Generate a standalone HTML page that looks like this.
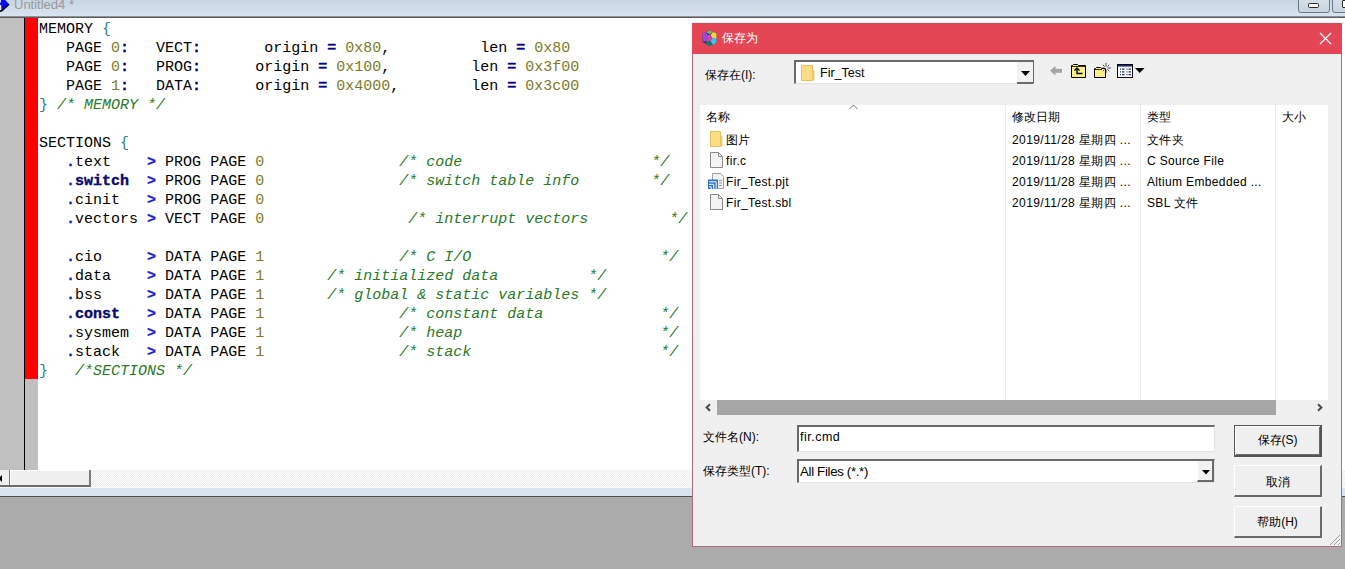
<!DOCTYPE html>
<html><head><meta charset="utf-8">
<style>
*{box-sizing:border-box}
html,body{margin:0;padding:0}
body{width:1345px;height:569px;overflow:hidden;position:relative;background:#ababab;font-family:"Liberation Sans",sans-serif}
.a{position:absolute}
#tbar{left:0;top:0;width:1345px;height:16px;background:linear-gradient(#c8d5e2,#d8e4f0)}
#tline{left:0;top:16px;width:1345px;height:2px;background:#5c5c5c;border-top:1px solid #8e9296}
#tline2{left:0;top:17px;width:1345px;height:1px;background:#b8b8b8}
#ed{left:0;top:17px;width:1345px;height:453px;background:#fff}
#gut{left:0;top:18px;width:24px;height:452px;background:#c0c0c0}
#gline{left:24px;top:18px;width:1px;height:452px;background:#000}
#gut2{left:25px;top:18px;width:13px;height:452px;background:#c0c0c0}
#red{left:25px;top:18px;width:13px;height:361px;background:#fe0000}
pre#code{left:39px;top:20px;margin:0;font-family:"Liberation Mono",monospace;font-size:15px;line-height:19px;color:#000}
.k{color:#000}
.br{color:#2a8080}
.n{color:#7c7c28}
.op{color:#00008c;font-weight:bold;-webkit-text-stroke:0.3px #00008c}
.dot{color:#1c1cd0;font-weight:bold;-webkit-text-stroke:0.3px #1c1cd0}
.sb{color:#0a0a70;font-weight:bold;-webkit-text-stroke:0.4px #0a0a70}
.c{color:#277a27;font-style:italic}
#hsb{left:0;top:470px;width:1345px;height:17px;background:repeating-conic-gradient(#ececec 0 25%,#fdfdfd 0 50%) 0 0/2px 2px}
#hsbl{left:0;top:470px;width:9px;height:17px;background:#f0f0f0;border-bottom:2px solid #6a6a6a}
#thumb{left:9px;top:470px;width:82px;height:17px;background:#efefef;border-left:1px solid #7a7a7a;border-bottom:2px solid #6a6a6a;border-right:2px solid #7a7a7a;box-shadow:inset 1px 1px 0 #fff}
#wl{left:0;top:487px;width:1345px;height:1px;background:#f8fbfd}
#blu{left:0;top:488px;width:1345px;height:8px;background:#d9e4ee}
#bl2{left:0;top:496px;width:1345px;height:1px;background:#4e4e4e}
#ttl{left:14px;top:-3px;font-size:13px;color:#9a9a9a}
/* dialog */
#dlg{left:692px;top:23px;width:650px;height:524px;background:#f0f0f0;border:1px solid #b86a7a;border-top:0}
#dtitle{left:692px;top:23px;width:650px;height:31px;background:#e54655}
.cj{font-size:12px;color:#000}
.row{line-height:14px;letter-spacing:0.35px}
.dt{letter-spacing:0.4px}
.btn{background:#f0f0f0;border-top:1px solid #fff;border-left:1px solid #fff;border-right:2px solid #6a6a6a;border-bottom:2px solid #6a6a6a;font-size:12px;text-align:center;line-height:28px;color:#000}
.def{border:1px solid #555;box-shadow:inset 1px 1px 0 #fff,inset -1px -1px 0 #6a6a6a;border-bottom-width:2px;border-right-width:2px}
</style></head><body>
<div class="a" id="ed"></div>
<div class="a" id="tbar"></div>
<div class="a" id="tline"></div>
<div class="a" id="gut"></div>
<div class="a" id="gline"></div>
<div class="a" id="gut2"></div>
<div class="a" id="red"></div>
<svg class="a" style="left:0;top:0" width="12" height="14" viewBox="0 0 12 14">
 <polygon points="0,2.5 1,2.5 1,-4.5 9.2,4.3 1.5,11.3 0,11.3" fill="#0a0af0"/>
 <rect x="0" y="5" width="1.2" height="5.5" fill="#fff"/>
 <path d="M9.2,4.3 L1.6,11 H0" fill="none" stroke="#000" stroke-width="1.4"/>
</svg>
<div class="a" style="left:1298px;top:-3px;width:32px;height:16px;border:1px solid #6e7a88;border-radius:3px;background:linear-gradient(#d6e0ea,#c8d4e0)"></div>
<div class="a" style="left:1308px;top:3px;width:11px;height:5px;border:1px solid #2a2a2a;border-radius:1.5px;background:#fff"></div>
<div class="a" style="left:1332px;top:-3px;width:20px;height:16px;border:1px solid #6e7a88;border-radius:3px;background:linear-gradient(#d6e0ea,#c8d4e0)"></div>
<div class="a" style="left:1342px;top:0px;width:8px;height:8px;border:1px solid #2a2a2a;border-radius:1px;background:#fff"></div>
<div class="a" id="ttl">Untitled4 *</div>
<pre class="a" id="code"><span class="k">MEMORY</span> <span class="br">{</span>
   <span class="k">PAGE</span> <span class="n">0</span><span class="op">:</span>   <span class="k">VECT</span><span class="op">:</span>       <span class="k">origin</span> <span class="op">=</span> <span class="n">0x80</span><span class="k">,</span>          <span class="k">len</span> <span class="op">=</span> <span class="n">0x80</span>
   <span class="k">PAGE</span> <span class="n">0</span><span class="op">:</span>   <span class="k">PROG</span><span class="op">:</span>      <span class="k">origin</span> <span class="op">=</span> <span class="n">0x100</span><span class="k">,</span>         <span class="k">len</span> <span class="op">=</span> <span class="n">0x3f00</span>
   <span class="k">PAGE</span> <span class="n">1</span><span class="op">:</span>   <span class="k">DATA</span><span class="op">:</span>      <span class="k">origin</span> <span class="op">=</span> <span class="n">0x4000</span><span class="k">,</span>        <span class="k">len</span> <span class="op">=</span> <span class="n">0x3c00</span>
<span class="br">}</span> <span class="c">/* MEMORY */</span>

<span class="k">SECTIONS</span> <span class="br">{</span>
   <span class="dot">.</span><span class="k">text</span>    <span class="dot">&gt;</span> <span class="k">PROG</span> <span class="k">PAGE</span> <span class="n">0</span>               <span class="c">/* code</span>                     <span class="c">*/</span>
   <span class="dot">.</span><span class="sb">switch</span>  <span class="dot">&gt;</span> <span class="k">PROG</span> <span class="k">PAGE</span> <span class="n">0</span>               <span class="c">/* switch table info</span>        <span class="c">*/</span>
   <span class="dot">.</span><span class="k">cinit</span>   <span class="dot">&gt;</span> <span class="k">PROG</span> <span class="k">PAGE</span> <span class="n">0</span>
   <span class="dot">.</span><span class="k">vectors</span> <span class="dot">&gt;</span> <span class="k">VECT</span> <span class="k">PAGE</span> <span class="n">0</span>                <span class="c">/* interrupt vectors</span>         <span class="c">*/</span>

   <span class="dot">.</span><span class="k">cio</span>     <span class="dot">&gt;</span> <span class="k">DATA</span> <span class="k">PAGE</span> <span class="n">1</span>               <span class="c">/* C I/O</span>                     <span class="c">*/</span>
   <span class="dot">.</span><span class="k">data</span>    <span class="dot">&gt;</span> <span class="k">DATA</span> <span class="k">PAGE</span> <span class="n">1</span>       <span class="c">/* initialized data</span>          <span class="c">*/</span>
   <span class="dot">.</span><span class="k">bss</span>     <span class="dot">&gt;</span> <span class="k">DATA</span> <span class="k">PAGE</span> <span class="n">1</span>       <span class="c">/* global &amp; static variables</span> <span class="c">*/</span>
   <span class="dot">.</span><span class="sb">const</span>   <span class="dot">&gt;</span> <span class="k">DATA</span> <span class="k">PAGE</span> <span class="n">1</span>               <span class="c">/* constant data</span>             <span class="c">*/</span>
   <span class="dot">.</span><span class="k">sysmem</span>  <span class="dot">&gt;</span> <span class="k">DATA</span> <span class="k">PAGE</span> <span class="n">1</span>               <span class="c">/* heap</span>                      <span class="c">*/</span>
   <span class="dot">.</span><span class="k">stack</span>   <span class="dot">&gt;</span> <span class="k">DATA</span> <span class="k">PAGE</span> <span class="n">1</span>               <span class="c">/* stack</span>                     <span class="c">*/</span>
<span class="br">}</span>   <span class="c">/*SECTIONS */</span></pre>
<div class="a" id="hsb"></div>
<div class="a" id="hsbl"></div>
<div class="a" id="thumb"></div>
<svg class="a" style="left:0;top:475px" width="3" height="7" viewBox="0 0 3 7"><path d="M2 0V7L-1.5 3.5Z" fill="#000"/></svg>
<div class="a" id="wl"></div>
<div class="a" id="blu"></div>
<div class="a" id="bl2"></div>

<div class="a" id="dlg"></div>
<div class="a" id="dtitle"></div>
<svg class="a" style="left:701px;top:29px" width="17" height="18" viewBox="0 0 17 18">
 <polygon points="8,1.5 15.5,4.5 15.5,13 8.5,17 1.5,13 1.5,4.5" fill="#4a2a6a"/>
 <polygon points="5,3 8.5,1.5 12,3 8.5,5.5" fill="#5cc85c"/>
 <polygon points="12,3 15.5,4.5 15.5,10 11,9 9.5,6" fill="#f0d838"/>
 <polygon points="15.5,10 15.5,13 12,16 9.5,12 11,9" fill="#38c8f0"/>
 <polygon points="12,16 8.5,17 5,15.5 5.5,12 9.5,12" fill="#1a7a70"/>
 <polygon points="1.5,4.5 5,3 6.5,6 5.5,12 2,12.5" fill="#9a4ae0"/>
 <polygon points="6.5,6 9.5,6 11,9 9.5,12 5.5,12" fill="#e03ab0"/>
</svg>
<div class="a" style="left:722px;top:31px;font-size:12px;color:#fff;line-height:14px">保存为</div>
<svg class="a" style="left:1319px;top:32px" width="13" height="13" viewBox="0 0 13 13"><path d="M1 1L12 12M12 1L1 12" stroke="#fff" stroke-width="1.2"/></svg>

<div class="a cj" style="left:705px;top:68px;line-height:14px">保存在(I):</div>
<div class="a" style="left:794px;top:60px;width:240px;height:24px;background:#fff;border-top:2px solid #6a6a6a;border-left:2px solid #6a6a6a;border-right:1px solid #6a6a6a;border-bottom:1px solid #e3e3e3"></div>
<svg class="a" style="left:801px;top:65px" width="14" height="16" viewBox="0 0 14 16"><path d="M0.5 0.5H11.5V15.5H0.5Z" fill="#fcdc84" stroke="#e8c060"/><path d="M11.5 3L13.5 6V15.5H11.5Z" fill="#e8c870"/></svg>
<div class="a cj" style="left:820px;top:66px;line-height:14px;font-size:12.5px">Fir_Test</div>
<div class="a" style="left:1017px;top:62px;width:16px;height:22px;background:#f2f2f2;border-bottom:2px solid #6a6a6a"></div>
<svg class="a" style="left:1021px;top:71px" width="9" height="5" viewBox="0 0 9 5"><path d="M0 0H9L4.5 5Z" fill="#000"/></svg>

<!-- toolbar -->
<svg class="a" style="left:1040px;top:58px" width="110" height="24" viewBox="0 0 110 24">
 <path d="M10 12.7L15.5 7.8V10.8H22V14.8H15.5V17.6Z" fill="#a4a4a4"/>
 <path d="M31.5 19.5V7.5H32.5L33.5 6.5H37.5L38.5 7.5H45.5V19.5Z" fill="#f8f084" stroke="#000" stroke-width="1"/>
 <path d="M31.5 8.5H45.5" stroke="#000" stroke-width="0.8"/>
 <path d="M34.5 12.5L37 10L39.5 12.5" fill="none" stroke="#000" stroke-width="1.3"/>
 <path d="M37 10.5V15.5H42.5" fill="none" stroke="#000" stroke-width="1.4"/>
 <path d="M54.5 19.5V10.5H55.5L56.5 9.5H60.5L61.5 10.5H65.5V19.5Z" fill="#f8f084" stroke="#000" stroke-width="1"/>
 <path d="M54.5 11.5H62" stroke="#000" stroke-width="0.8"/>
 <path d="M66 5V8.5M66 11.5V15M61.5 10H64.5M67.5 10H71M62.8 6.8L64.6 8.6M67.4 11.4L69.2 13.2M69.2 6.8L67.4 8.6M64.6 11.4L62.8 13.2" stroke="#000" stroke-width="0.7"/>
 <rect x="77.5" y="6.5" width="15" height="13" fill="#fff" stroke="#000"/>
 <rect x="78" y="7" width="14" height="1.6" fill="#1c2c7c"/>
 <path d="M80 11.2h1M82 11.2h2.5M86.5 11.2h1M88.5 11.2h2.5M80 13.9h1M82 13.9h2.5M86.5 13.9h1M88.5 13.9h2.5M80 16.6h1M82 16.6h2.5M86.5 16.6h1M88.5 16.6h2.5" stroke="#1c2c7c" stroke-width="1.3"/>
 <path d="M95 10H104.5L99.75 15Z" fill="#000"/>
</svg>
<!-- list -->
<div class="a" style="left:700px;top:105px;width:628px;height:295px;background:#fff"></div>
<div class="a" style="left:1005px;top:105px;width:1px;height:295px;background:#ededed"></div>
<div class="a" style="left:1140px;top:105px;width:1px;height:295px;background:#ededed"></div>
<div class="a" style="left:1275px;top:105px;width:1px;height:295px;background:#ededed"></div>
<svg class="a" style="left:849px;top:104px" width="9" height="6" viewBox="0 0 9 6"><path d="M0.5 5L4.5 1L8.5 5" fill="none" stroke="#707070" stroke-width="1"/></svg>
<div class="a cj" style="left:706px;top:110px;line-height:14px">名称</div>
<div class="a cj" style="left:1012px;top:110px;line-height:14px">修改日期</div>
<div class="a cj" style="left:1147px;top:110px;line-height:14px">类型</div>
<div class="a cj" style="left:1282px;top:110px;line-height:14px">大小</div>

<svg class="a" style="left:710px;top:131px" width="13" height="16" viewBox="0 0 13 16"><path d="M0.5 0.5H10.5V15.5H0.5Z" fill="#fcdc84" stroke="#e8c060"/><path d="M10.5 3L12.5 6V15.5H10.5Z" fill="#e8c870"/></svg>
<svg class="a" style="left:710px;top:152px" width="13" height="16" viewBox="0 0 13 16"><path d="M0.5 0.5H8.5L12.5 4.5V15.5H0.5Z" fill="#f4f4f4" stroke="#8a8a8a"/><path d="M8.5 0.5V4.5H12.5" fill="none" stroke="#8a8a8a"/></svg>
<svg class="a" style="left:708px;top:173px" width="17" height="17" viewBox="0 0 17 17"><path d="M4.5 0.5H12.5L15.5 3.5V15.5H4.5Z" fill="#f2f2f2" stroke="#a0a0a0"/><path d="M11 7.5H14M11 10H14M11 12.5H14" stroke="#909090" stroke-width="0.9"/><rect x="0" y="6.5" width="10" height="9.5" fill="#2f74cc"/><path d="M1 8.8H8.2V16M1 11.3H5.7V16M1 13.8H3.2V16" fill="none" stroke="#fff" stroke-width="1"/></svg>
<svg class="a" style="left:710px;top:194px" width="13" height="16" viewBox="0 0 13 16"><path d="M0.5 0.5H8.5L12.5 4.5V15.5H0.5Z" fill="#f4f4f4" stroke="#8a8a8a"/><path d="M8.5 0.5V4.5H12.5" fill="none" stroke="#8a8a8a"/></svg>

<div class="a cj row" style="left:726px;top:133px">图片</div>
<div class="a cj row" style="left:726px;top:154px">fir.c</div>
<div class="a cj row" style="left:726px;top:175px">Fir_Test.pjt</div>
<div class="a cj row" style="left:726px;top:196px">Fir_Test.sbl</div>
<div class="a cj row dt" style="left:1012px;top:133px">2019/11/28 星期四 ...</div>
<div class="a cj row dt" style="left:1012px;top:154px">2019/11/28 星期四 ...</div>
<div class="a cj row dt" style="left:1012px;top:175px">2019/11/28 星期四 ...</div>
<div class="a cj row dt" style="left:1012px;top:196px">2019/11/28 星期四 ...</div>
<div class="a cj row" style="left:1147px;top:133px">文件夹</div>
<div class="a cj row" style="left:1147px;top:154px">C Source File</div>
<div class="a cj row" style="left:1147px;top:175px">Altium Embedded ...</div>
<div class="a cj row" style="left:1147px;top:196px">SBL 文件</div>

<!-- list hscroll -->
<div class="a" style="left:700px;top:400px;width:628px;height:15px;background:#f0f0f0"></div>
<div class="a" style="left:717px;top:400px;width:559px;height:15px;background:#a6a6a6"></div>
<svg class="a" style="left:704px;top:403px" width="8" height="9" viewBox="0 0 8 9"><path d="M6 1.2L2.6 4.5L6 7.8" fill="none" stroke="#4a4a4a" stroke-width="2"/></svg>
<svg class="a" style="left:1316px;top:403px" width="8" height="9" viewBox="0 0 8 9"><path d="M2 1.2L5.4 4.5L2 7.8" fill="none" stroke="#4a4a4a" stroke-width="2"/></svg>

<!-- bottom -->
<div class="a cj" style="left:703px;top:430px;line-height:14px">文件名(N):</div>
<div class="a cj" style="left:703px;top:464px;line-height:14px">保存类型(T):</div>
<div class="a" style="left:797px;top:425px;width:418px;height:27px;background:#fff;border-top:2px solid #6a6a6a;border-left:2px solid #6a6a6a;border-bottom:1px solid #e3e3e3;border-right:1px solid #e3e3e3"></div>
<div class="a cj" style="left:800px;top:430px;line-height:14px;font-size:12.5px;letter-spacing:0.5px">fir.cmd</div>
<div class="a" style="left:797px;top:459px;width:418px;height:24px;background:#fff;border-top:2px solid #6a6a6a;border-left:2px solid #6a6a6a;border-bottom:1px solid #e3e3e3;border-right:1px solid #e3e3e3"></div>
<div class="a cj" style="left:800px;top:465px;line-height:14px;font-size:13.2px;letter-spacing:-0.3px">All Files (*.*)</div>
<div class="a" style="left:1197px;top:461px;width:17px;height:21px;background:#f2f2f2;border-right:2px solid #6a6a6a;border-bottom:2px solid #6a6a6a;border-left:1px solid #fff"></div>
<svg class="a" style="left:1201.5px;top:470px" width="8" height="5" viewBox="0 0 8 5"><path d="M0 0H8L4 4.5Z" fill="#000"/></svg>

<div class="a btn def" style="left:1234px;top:425px;width:88px;height:32px">保存(S)</div>
<div class="a btn" style="left:1234px;top:465px;width:88px;height:32px;padding-top:2px">取消</div>
<div class="a btn" style="left:1234px;top:506px;width:88px;height:32px;padding-top:1px">帮助(H)</div>
<svg class="a" style="left:1327px;top:532px" width="14" height="14" viewBox="0 0 14 14"><path d="M13 3L3 13M13 7L7 13M13 11L11 13" stroke="#a0a0a0" stroke-width="1"/></svg>
</body></html>
